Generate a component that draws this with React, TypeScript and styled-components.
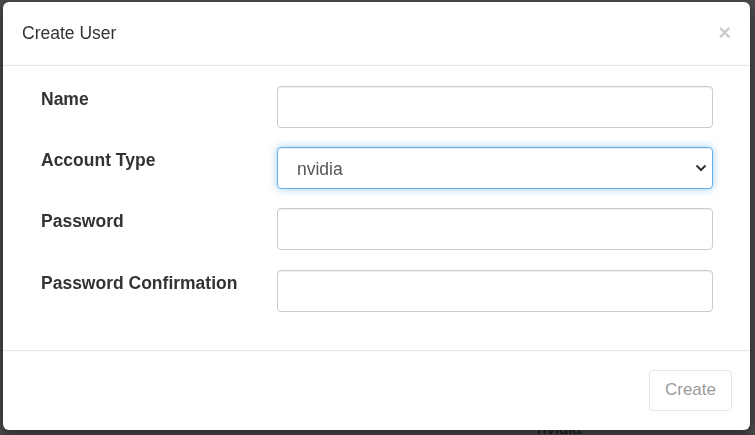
import styled, { createGlobalStyle } from 'styled-components';
import { useState } from 'react';

const GlobalStyle = createGlobalStyle`
  html, body {
    margin: 0;
    padding: 0;
    background: #4c4c4c;
    font-family: "Liberation Sans", Arial, sans-serif;
    color: #333;
  }
  * {
    box-sizing: border-box;
  }
`;

const S = {
  Page: styled.div`
    width: 100vw;
    height: 100vh;
    overflow: hidden;
    padding: 419px 0 0 537px;
  `,
  PageCell: styled.span`
    font-size: 17px;
    color: #1c1c1c;
  `,
  Modal: styled.div`
    position: fixed;
    top: 2px;
    left: 3px;
    width: 747px;
    height: 428px;
    background: #fff;
    border-radius: 6px;
    box-shadow: 0 5px 15px rgba(0, 0, 0, 0.5);
    display: flex;
    flex-direction: column;
  `,
  Header: styled.div`
    height: 64px;
    padding: 0 19px;
    border-bottom: 1px solid #e5e5e5;
    display: flex;
    align-items: center;
    justify-content: space-between;
  `,
  Title: styled.h4`
    margin: 0;
    font-size: 17.5px;
    font-weight: normal;
    color: #333;
  `,
  Close: styled.button`
    border: none;
    background: none;
    padding: 0;
    font-family: "Liberation Sans", Arial, sans-serif;
    font-size: 22px;
    font-weight: bold;
    line-height: 1;
    color: #000;
    opacity: 0.2;
    cursor: pointer;
  `,
  Body: styled.div`
    flex: 1;
    padding: 20px 37px 38px 38px;
    display: flex;
    flex-direction: column;
    gap: 19.3px;
  `,
  Row: styled.div`
    display: grid;
    grid-template-columns: 236px 1fr;
    align-items: start;
  `,
  Label: styled.label`
    font-size: 17.5px;
    font-weight: bold;
    color: #333;
    padding-top: 3px;
  `,
  Input: styled.input`
    width: 100%;
    height: 42px;
    padding: 0 19px;
    font-family: "Liberation Sans", Arial, sans-serif;
    font-size: 17.5px;
    color: #555;
    border: 1px solid #ccc;
    border-radius: 4px;
    box-shadow: inset 0 1px 1px rgba(0, 0, 0, 0.075);
    outline: none;
  `,
  SelectWrap: styled.div`
    position: relative;
  `,
  Select: styled.select<{ $focused: boolean }>`
    width: 100%;
    height: 42px;
    padding: 2px 19px 0;
    appearance: none;
    background: #fff;
    font-family: "Liberation Sans", Arial, sans-serif;
    font-size: 17.5px;
    color: #555;
    border: 1px solid ${p => (p.$focused ? '#66afe9' : '#ccc')};
    border-radius: 4px;
    box-shadow: ${p =>
      p.$focused
        ? 'inset 0 1px 1px rgba(0,0,0,.075), 0 0 8px rgba(102,175,233,.6)'
        : 'inset 0 1px 1px rgba(0,0,0,.075)'};
    outline: none;
  `,
  Chevron: styled.svg`
    position: absolute;
    right: 6px;
    top: 17px;
    width: 12px;
    height: 8px;
    pointer-events: none;
  `,
  Footer: styled.div`
    height: 81px;
    border-top: 1px solid #e5e5e5;
    padding: 0 18px 0 19px;
    display: flex;
    align-items: center;
    justify-content: flex-end;
  `,
  Button: styled.button`
    height: 41px;
    padding: 0 15px;
    font-family: "Liberation Sans", Arial, sans-serif;
    font-size: 17px;
    color: #333;
    background: #fff;
    border: 1px solid #ccc;
    border-radius: 4px;
    &:disabled {
      opacity: 0.5;
      cursor: not-allowed;
    }
  `,
};

const fields = ['Name', 'Account Type', 'Password', 'Password Confirmation'];

function App() {
  const [accountType, setAccountType] = useState('nvidia');

  return (
    <>
      <GlobalStyle />
      <S.Page>
        <S.PageCell>nvidia</S.PageCell>
      </S.Page>
      <S.Modal>
        <S.Header>
          <S.Title>Create User</S.Title>
          <S.Close>×</S.Close>
        </S.Header>
        <S.Body>
          {fields.map(name => (
            <S.Row key={name}>
              <S.Label>{name}</S.Label>
              {name === 'Account Type' ? (
                <S.SelectWrap>
                  <S.Select
                    $focused
                    value={accountType}
                    onChange={e => setAccountType(e.target.value)}
                  >
                    <option value="nvidia">nvidia</option>
                    <option value="local">local</option>
                  </S.Select>
                  <S.Chevron viewBox="0 0 12 8">
                    <path d="M1.5 1.5 L6 6 L10.5 1.5" fill="none" stroke="#333" strokeWidth="2" />
                  </S.Chevron>
                </S.SelectWrap>
              ) : (
                <S.Input type={name.startsWith('Password') ? 'password' : 'text'} />
              )}
            </S.Row>
          ))}
        </S.Body>
        <S.Footer>
          <S.Button disabled>Create</S.Button>
        </S.Footer>
      </S.Modal>
    </>
  );
}

export default App;
